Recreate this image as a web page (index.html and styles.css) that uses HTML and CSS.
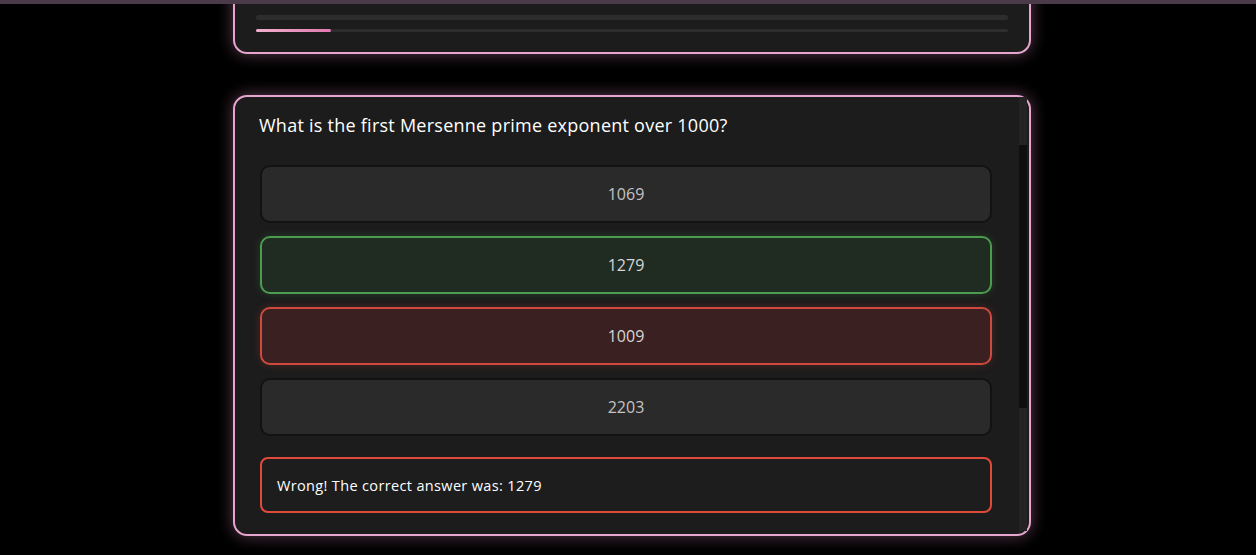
FILE: index.html
```html
<!DOCTYPE html>
<html lang="en">
<head>
<meta charset="utf-8">
<title>Quiz</title>
<link rel="stylesheet" href="styles.css">
</head>
<body>
<div class="topbar"></div>
<main class="page">
  <section class="card card-progress">
    <div class="track track-lg"></div>
    <div class="track track-sm"><div class="fill" style="width:10%"></div></div>
  </section>

  <section class="card card-quiz">
    <div class="quiz-body">
      <h2 class="question">What is the first Mersenne prime exponent over 1000?</h2>
      <div class="options">
        <button class="option">1069</button>
        <button class="option correct">1279</button>
        <button class="option wrong">1009</button>
        <button class="option">2203</button>
      </div>
      <div class="feedback">Wrong! The correct answer was: 1279</div>
    </div>
    <div class="scrollbar"><div class="thumb"></div></div>
  </section>
</main>
</body>
</html>
```
FILE: styles.css
```css
* { box-sizing: border-box; }
html, body { margin: 0; padding: 0; background: #000; overflow: hidden; }
body { font-family: "Open Sans", "Inter", sans-serif; color: #fff; height: 555px; }

.topbar {
  position: fixed; top: 0; left: 0; right: 0; height: 4px;
  background: #4a3a4a; z-index: 5;
}

.page {
  width: 806px;
  margin: 0 auto;
  padding-left: 8px;
}

.card {
  background: #1c1c1c;
  border: 2px solid #e6a5cf;
  border-radius: 14px;
  box-shadow: 0 0 16px rgba(230, 150, 200, 0.4);
}

.card-progress {
  margin-top: -30px;
  padding: 43px 21px 20px;
}
.track { background: #2d2d2d; border-radius: 3px; }
.track-lg { height: 5px; }
.track-sm { height: 3px; margin-top: 9px; }
.fill { height: 100%; background: linear-gradient(90deg, #f0b0cc, #e27ab0); border-radius: 2px; }

.card-quiz {
  margin-top: 41px;
  height: 441px;
  display: flex;
}
.quiz-body {
  flex: 1;
  padding: 15px 27px 0 24px;
}
.question {
  margin: 0 0 26px;
  font-size: 18px;
  font-weight: 500;
  letter-spacing: 0.25px;
  line-height: 27px;
  color: #fff;
}
.options { display: flex; flex-direction: column; gap: 13px; padding-left: 1px; }
.option {
  height: 58px;
  border-radius: 10px;
  border: 2px solid #121212;
  background: #2a2a2a;
  color: #c4c4c4;
  font-family: inherit;
  font-size: 16px;
  text-align: center;
  padding: 0;
}
.option.correct { background: #202c22; border-color: #4c9c50; color: #d6d6d6; box-shadow: 0 0 8px rgba(76,156,80,0.25); }
.option.wrong { background: #3a2020; border-color: #cf4a3e; color: #d6d6d6; box-shadow: 0 0 8px rgba(207,74,62,0.25); }

.feedback {
  margin: 21px 0 0 1px;
  height: 56px;
  border: 2px solid #df4a3c;
  border-radius: 8px;
  background: #1d1d1d;
  display: flex; align-items: center;
  padding-left: 15px;
  font-size: 14.5px;
  font-weight: 500;
  letter-spacing: 0.35px;
  color: #fff;
}

.scrollbar {
  width: 8px;
  margin: 0 2px 3px 0;
  background: #242424;
  padding-top: 48px;
}
.thumb { height: 263px; background: #0f0f0f; }
```
